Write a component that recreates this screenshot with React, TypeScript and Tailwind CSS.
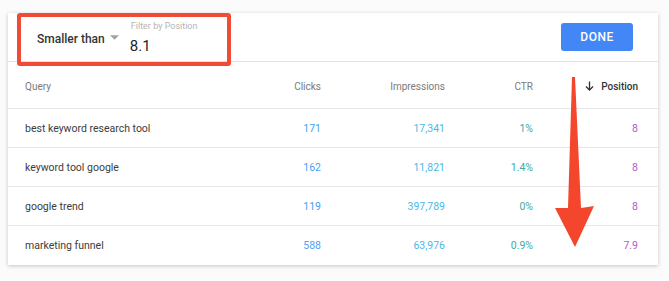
const ROWS = [
  { q: 'best keyword research tool', clicks: '171', imp: '17,341', ctr: '1%', pos: '8' },
  { q: 'keyword tool google', clicks: '162', imp: '11,821', ctr: '1.4%', pos: '8' },
  { q: 'google trend', clicks: '119', imp: '397,789', ctr: '0%', pos: '8' },
  { q: 'marketing funnel', clicks: '588', imp: '63,976', ctr: '0.9%', pos: '7.9' },
]

const COLS = 'grid grid-cols-[216px_80px_124px_88px_105px] items-center'

export default function App() {
  return (
    <div
      className="relative w-[669px] h-[281px] bg-[#fbfbfb] pt-[13px] pl-[8px] overflow-hidden"
      style={{ fontFamily: 'Roboto, "Liberation Sans", sans-serif' }}
    >
      <div className="w-[650px] bg-white shadow-[0_1px_4px_rgba(0,0,0,0.22)]">
        {/* Filter header */}
        <div className="h-[49px] flex items-center pl-[29px] pr-[25px] border-b border-[#e3e3e3]">
          <div className="flex items-center pt-[4px]">
            <span className="text-[12px] text-[#333] font-medium">Smaller than</span>
            <svg width="9" height="6" viewBox="0 0 10 6" className="ml-[5px] mb-[3px]">
              <polygon points="0,0 10,0 5,5" fill="#a3a3a3" />
            </svg>
          </div>
          <div className="relative ml-[11px] w-[90px] h-[40px]">
            <span className="absolute left-[1px] top-[3px] text-[9px] text-[#b5b5b5]">Filter by Position</span>
            <span className="absolute left-0 top-[18px] text-[15px] text-[#222]">8.1</span>
          </div>
          <button className="ml-auto w-[72px] h-[28px] rounded-[3px] bg-[#4287f5] text-white text-[12px] font-medium tracking-[0.04em]">
            DONE
          </button>
        </div>

        {/* Column headers */}
        <div className={`${COLS} h-[47px] pt-[2px] pl-[17px] border-b border-[#e6e6e6] text-[10px] text-[#7a7a7a]`}>
          <span>Query</span>
          <span className="text-right">Clicks</span>
          <span className="text-right">Impressions</span>
          <span className="text-right">CTR</span>
          <span className="flex items-center justify-end gap-[7px] text-[#333] font-medium">
            <svg width="9" height="10" viewBox="0 0 9 10" fill="none" stroke="#333" strokeWidth="1.3">
              <line x1="4.5" y1="0.5" x2="4.5" y2="9" />
              <polyline points="1,5.5 4.5,9 8,5.5" />
            </svg>
            Position
          </span>
        </div>

        {ROWS.map((r, i) => (
          <div
            key={r.q}
            className={`${COLS} h-[39px] pt-[1px] pl-[17px] text-[10.5px] ${i < ROWS.length - 1 ? 'border-b border-[#e6e6e6]' : ''}`}
          >
            <span className="text-[#3c3c3c]">{r.q}</span>
            <span className="text-right text-[#4a9ff2]">{r.clicks}</span>
            <span className="text-right text-[#4cb7e6]">{r.imp}</span>
            <span className="text-right text-[#3fa9a2]">{r.ctr}</span>
            <span className="text-right text-[#b25ac6]">{r.pos}</span>
          </div>
        ))}
      </div>

      {/* annotation: red box */}
      <div className="absolute left-[17px] top-[13px] w-[214px] h-[53px] border-[4px] border-[#f04b37] rounded-[3px]" />

      {/* annotation: red arrow */}
      <svg className="absolute left-0 top-0 pointer-events-none" width="669" height="281">
        <path
          d="M572,77 L575,77 L581,208 Q588,207 594,206 L575,247 L555,208 Q561,208 568,208 Z"
          fill="#f4462d"
        />
      </svg>
    </div>
  )
}
